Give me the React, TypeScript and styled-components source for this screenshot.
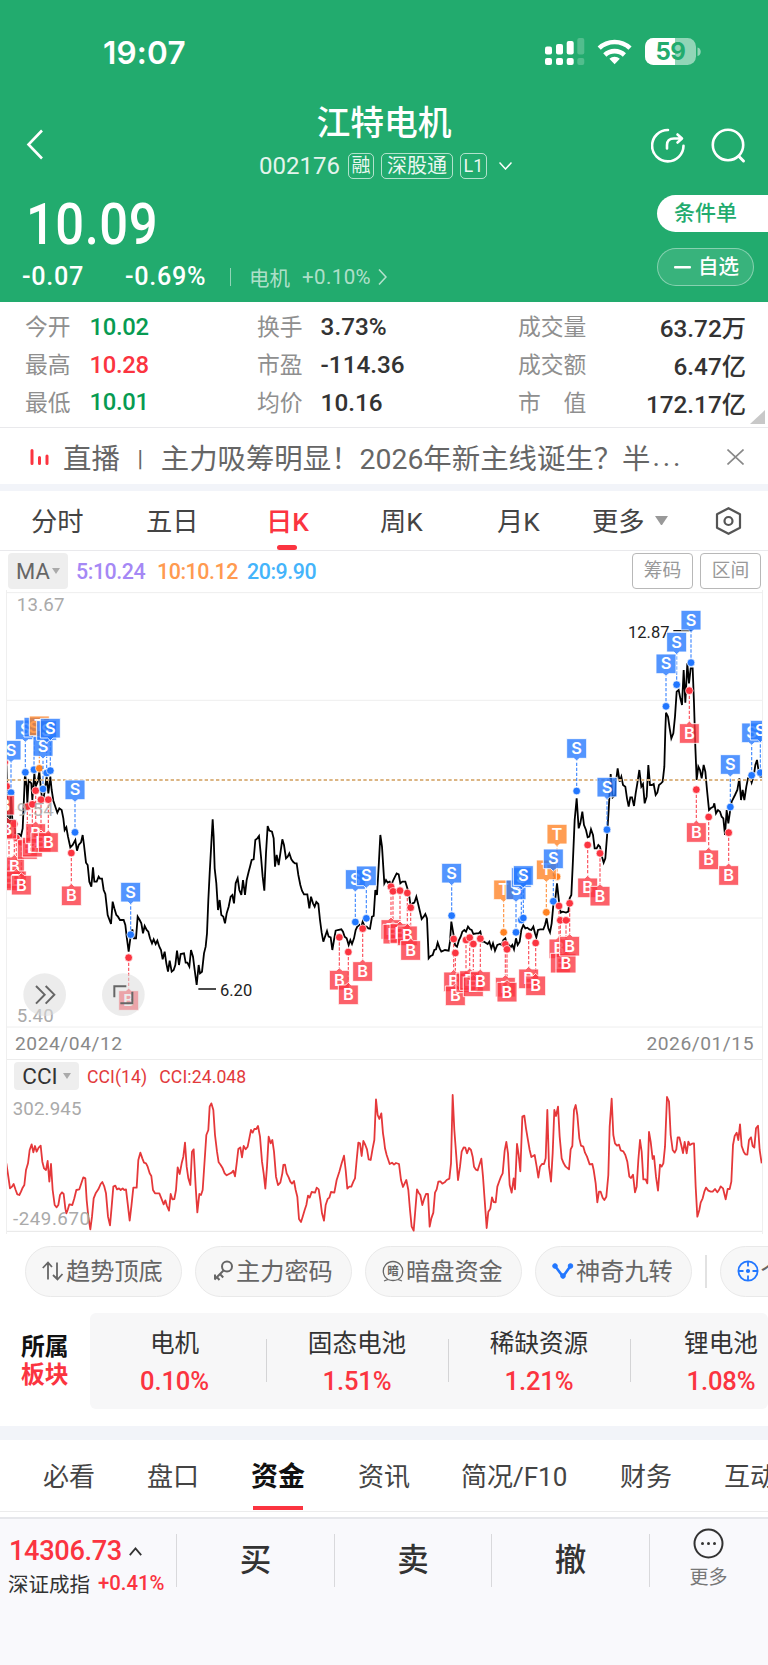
import React from 'react';
import styled, { createGlobalStyle, css } from 'styled-components';

const GREEN = '#22ab6e';
const RED = '#fb3440';

const GlobalStyle = createGlobalStyle`
  * { box-sizing: border-box; }
  body {
    margin: 0;
    width: 768px;
    background: #fff;
    font-family: Roboto, "Noto Sans CJK SC", sans-serif;
    color: #333;
  }
`;

const Screen = styled.main`
  width: 768px;
  height: 1665px;
  overflow: hidden;
  display: flex;
  flex-direction: column;
  background: #fff;
`;

/* ---------- header ---------- */

const Header = styled.header`
  height: 302px;
  background: ${GREEN};
  color: #fff;
`;

const StatusBar = styled.div`
  display: flex;
  justify-content: space-between;
  align-items: center;
  padding: 38px 67px 0 103px;
  height: 66px;
`;

const Clock = styled.span`
  font: 600 31.5px/28px Inter, sans-serif;
  letter-spacing: 0.2px;
  padding-top: 2px;
`;

const NavBar = styled.div`
  display: flex;
  justify-content: space-between;
  height: 124px;
  padding: 32px 22px 0 26px;
`;

const NavSide = styled.div`
  display: flex;
  width: 95px;
  padding-top: 30px;
`;

const TitleBlock = styled.div`
  display: flex;
  flex-direction: column;
  align-items: center;
  padding-right: 1px;
`;

const Title = styled.h1`
  margin: 0 3px 0 0;
  font-size: 33.8px;
  font-weight: 500;
  line-height: 52px;
`;

const CodeRow = styled.div`
  display: flex;
  align-items: center;
  height: 32px;
`;

const Code = styled.span`
  font-size: 24px;
  margin-right: 8px;
  opacity: 0.88;
`;

const Tag = styled.span<{ $w: number; $size?: number; $gap?: number }>`
  width: ${(p) => p.$w}px;
  height: 26px;
  margin-right: ${(p) => p.$gap ?? 7}px;
  border: 1.5px solid rgba(255, 255, 255, 0.65);
  border-radius: 5px;
  font-size: ${(p) => p.$size ?? 20}px;
  line-height: 24px;
  text-align: center;
  white-space: nowrap;
  color: rgba(255, 255, 255, 0.92);
`;

const QuoteArea = styled.div`
  display: flex;
  justify-content: space-between;
  height: 112px;
`;

const PriceBlock = styled.div`
  padding-left: 22px;
`;

const Price = styled.div`
  padding: 3px 0 0 4px;
  height: 65px;
  font-size: 58px;
  font-weight: 500;
  line-height: 62px;
  transform: scaleX(0.875);
  transform-origin: 4px 0;
  letter-spacing: 0.6px;
`;

const ChangeRow = styled.div`
  display: flex;
  align-items: center;
  height: 43px;
  font-size: 25.2px;
`;

const Change = styled.span<{ $w: number }>`
  width: ${(p) => p.$w}px;
  font-weight: 500;
  letter-spacing: 0.7px;
`;

const ThinBar = styled.i`
  width: 1px;
  height: 18px;
  background: rgba(255, 255, 255, 0.5);
`;

const Industry = styled.span`
  display: flex;
  align-items: center;
  gap: 12px;
  margin-left: 18px;
  font-size: 20.5px;
  color: rgba(255, 255, 255, 0.65);
  span { letter-spacing: 0.4px; }
  svg { margin-left: -5px; }
`;

const Actions = styled.div`
  display: flex;
  flex-direction: column;
  gap: 16px;
  width: 111px;
  padding-top: 5px;
`;

const ConditionButton = styled.button`
  height: 37px;
  padding: 0 0 0 17px;
  border: 0;
  border-radius: 19px 0 0 19px;
  background: #fff;
  color: ${GREEN};
  font: 500 21px/37px Roboto, "Noto Sans CJK SC", sans-serif;
  text-align: left;
`;

const WatchButton = styled.button`
  display: flex;
  align-items: center;
  gap: 7px;
  width: 97px;
  height: 38px;
  padding: 0 0 0 16px;
  border: 1.5px solid rgba(255, 255, 255, 0.4);
  border-radius: 19px;
  background: rgba(255, 255, 255, 0.1);
  color: #fff;
  font: 500 20.5px/35px Roboto, "Noto Sans CJK SC", sans-serif;
`;

/* ---------- key figures ---------- */

const Stats = styled.section`
  position: relative;
  display: grid;
  grid-template-columns: 232px 261px 228px;
  grid-auto-rows: 37.7px;
  height: 126px;
  padding: 5px 0 0 25px;
  border-bottom: 1.5px solid #e9e9ec;
`;

const Stat = styled.div<{ $gap: number; $spread?: boolean }>`
  display: flex;
  align-items: center;
  justify-content: ${(p) => (p.$spread ? 'space-between' : 'flex-start')};
  gap: ${(p) => p.$gap}px;
`;

const StatLabel = styled.span`
  font-size: 22.8px;
  color: #8f8f8f;
  white-space: pre;
`;

const StatValue = styled.span<{ $color?: string }>`
  padding-top: 2px;
  font-size: ${(p) => (p.$color ? 23.8 : 24.3)}px;
  font-weight: 500;
  letter-spacing: ${(p) => (p.$color ? -0.3 : 0)}px;
  color: ${(p) => p.$color ?? '#333'};
`;

const Corner = styled.svg`
  position: absolute;
  right: 3px;
  bottom: 3px;
`;

/* ---------- notice ---------- */

const Notice = styled.section`
  display: flex;
  align-items: center;
  height: 56px;
  padding: 0 24px 0 30px;
  font-size: 28.4px;
  color: #666;
  svg { margin-top: 2px; }
`;

const NoticeText = styled.span`
  display: flex;
  align-items: center;
  flex: 1;
  margin-left: 14px;
  white-space: pre;
`;

const NoticeBar = styled.i`
  margin: 3px 10px 0 10px;
  font-size: 21px;
  font-style: normal;
`;

const Dots = styled.span`
  margin-left: 2px;
  letter-spacing: 2.8px;
`;

const Band = styled.div<{ $h: number }>`
  height: ${(p) => p.$h}px;
  background: #f2f4f9;
`;

/* ---------- period tabs ---------- */

const PeriodTabs = styled.nav`
  display: flex;
  height: 60px;
  padding-left: 31px;
  border-bottom: 1.5px solid #e9e9ec;
`;

const Period = styled.span<{ $w: number; $active?: boolean }>`
  position: relative;
  width: ${(p) => p.$w}px;
  font-size: 26.3px;
  line-height: 62px;
  color: ${(p) => (p.$active ? RED : '#444')};
  font-weight: ${(p) => (p.$active ? 500 : 400)};
  ${(p) =>
    p.$active &&
    css`
      &::after {
        content: '';
        position: absolute;
        left: 11px;
        bottom: 0;
        width: 20px;
        height: 5px;
        border-radius: 2.5px;
        background: ${RED};
      }
    `}
`;

const PeriodIcon = styled.span<{ $w: number }>`
  display: flex;
  align-items: center;
  width: ${(p) => p.$w}px;
`;

/* ---------- chart ---------- */

const MaRow = styled.div`
  display: flex;
  align-items: center;
  height: 39px;
  padding: 1px 7px 0 8px;
`;

const Picker = styled.span<{ $w: number; $h: number; $size: number; $color: string }>`
  display: flex;
  align-items: center;
  justify-content: center;
  gap: ${(p) => (p.$h > 30 ? 2 : 5)}px;
  width: ${(p) => p.$w}px;
  height: ${(p) => p.$h}px;
  border-radius: 4px;
  background: #eee;
  font-size: ${(p) => p.$size}px;
  color: ${(p) => p.$color};
`;

const MaValues = styled.div`
  display: flex;
  flex: 1;
  margin-left: 8px;
`;

const MaValue = styled.span<{ $w: number; $color: string }>`
  width: ${(p) => p.$w}px;
  font-size: 21.4px;
  font-weight: 500;
  letter-spacing: -0.45px;
  color: ${(p) => p.$color};
`;

const OutlineButton = styled.button`
  width: 61px;
  height: 36px;
  margin-left: 7px;
  padding: 1px 0 0;
  border: 1.5px solid #b8b8b8;
  border-radius: 4px;
  background: #fff;
  color: #999;
  font: 400 18.8px/33px Roboto, "Noto Sans CJK SC", sans-serif;
`;

const Spacer = styled.i`
  flex: 1;
`;

const ChartFrame = styled.section`
  width: 757px;
  margin-left: 6px;
  border: solid #efefef;
  border-width: 0 1px;
`;

const Plot = styled.svg`
  display: block;
  width: 755px;
`;

const DateRow = styled.div`
  display: flex;
  justify-content: space-between;
  align-items: center;
  height: 32px;
  padding: 0 8px 0 8px;
  border-bottom: 1px solid #ececec;
  font-size: 19.2px;
  letter-spacing: 0.55px;
  color: #888;
`;

const CciHead = styled.div`
  display: flex;
  align-items: center;
  gap: 8px;
  height: 32px;
  padding-left: 7px;
  font-size: 17.6px;
  color: #e23a3c;
`;

const CciText = styled.span<{ $gap?: number }>`
  padding-top: 2px;
  margin-right: ${(p) => p.$gap ?? 0}px;
  letter-spacing: 0.1px;
`;

/* ---------- shortcuts ---------- */

const Pills = styled.section`
  display: flex;
  align-items: center;
  gap: 13px;
  height: 74px;
  padding-left: 25px;
  overflow: hidden;
`;

const Pill = styled.span`
  display: flex;
  flex: none;
  align-items: center;
  width: 157px;
  height: 51px;
  padding: 0 0 3px 16px;
  border: 1px solid #e9e9e9;
  border-radius: 26px;
  background: #f7f7f7;
  font-size: 24.2px;
  color: #666;
  white-space: nowrap;
  svg { flex: none; margin: 2px 2px 0 0; }
`;

const PillBar = styled.i`
  flex: none;
  width: 1.5px;
  height: 33px;
  background: #e2e2e2;
`;

/* ---------- sectors ---------- */

const Sectors = styled.section`
  display: flex;
  height: 118px;
  padding-top: 5px;
`;

const SectorTitle = styled.div`
  width: 90px;
  padding: 20px 0 0 21px;
  font-size: 23.8px;
  font-weight: 700;
  line-height: 28px;
  color: #111;
  em { display: block; font-style: normal; color: ${RED}; }
`;

const SectorPanel = styled.div`
  display: flex;
  flex: 1;
  height: 96px;
  border-radius: 6px;
  background: #f7f7f8;
  overflow: hidden;
`;

const Sector = styled.div<{ $first?: boolean }>`
  flex: none;
  display: flex;
  flex-direction: column;
  align-items: center;
  position: relative;
  width: ${(p) => (p.$first ? 177 : 182)}px;
  padding: ${(p) => (p.$first ? '15px 8px 0 0' : '15px 2px 0 0')};
  font-size: 24.6px;
  line-height: 32px;
  &:not(:last-child)::after {
    content: '';
    position: absolute;
    right: 0;
    top: 26px;
    width: 1.5px;
    height: 43px;
    background: #d4d4d6;
  }
  b {
    margin-top: 6px;
    font-size: 25.6px;
    font-weight: 500;
    line-height: 30px;
    letter-spacing: -0.1px;
    color: ${RED};
  }
`;

/* ---------- info tabs ---------- */

const InfoTabs = styled.nav`
  display: flex;
  height: 72px;
  padding-left: 43px;
  border-bottom: 1px solid #ececec;
  overflow: hidden;
`;

const InfoTab = styled.span<{ $w: number; $active?: boolean }>`
  position: relative;
  flex: none;
  width: ${(p) => p.$w}px;
  font-size: ${(p) => (p.$active ? 27 : 26)}px;
  line-height: 74px;
  font-weight: ${(p) => (p.$active ? 700 : 400)};
  color: ${(p) => (p.$active ? '#111' : '#444')};
  ${(p) =>
    p.$active &&
    css`
      &::after {
        content: '';
        position: absolute;
        left: 2px;
        bottom: 1px;
        width: 50px;
        height: 4px;
        background: ${RED};
      }
    `}
`;

/* ---------- bottom bar ---------- */

const BottomBar = styled.footer`
  display: flex;
  flex: 1;
  margin-top: 5px;
  border-top: 2px solid #e6e7eb;
  background: #f9f9fc;
`;

const IndexBlock = styled.div`
  width: 176px;
  padding: 16px 0 0 8px;
`;

const IndexValue = styled.div`
  display: flex;
  align-items: center;
  gap: 7px;
  height: 32px;
  padding-left: 1px;
  font-size: 27.2px;
  font-weight: 500;
  letter-spacing: -0.35px;
  color: ${RED};
`;

const IndexName = styled.div`
  display: flex;
  align-items: center;
  gap: 8px;
  height: 31px;
  font-size: 20.5px;
  white-space: nowrap;
  b { font-weight: 500; font-size: 20.3px; color: ${RED}; }
`;

const Trade = styled.span<{ $w: number }>`
  width: ${(p) => p.$w}px;
  height: 53px;
  margin-top: 15px;
  border-left: 1.5px solid #d9d9dc;
  font-size: 31.5px;
  font-weight: 500;
  line-height: 54px;
  text-align: center;
`;

const More = styled.div`
  display: flex;
  flex-direction: column;
  align-items: center;
  width: 119px;
  height: 53px;
  margin-top: 15px;
  padding-right: 1px;
  border-left: 1.5px solid #d9d9dc;
  font-size: 19px;
  line-height: 30px;
  color: #777;
  svg { flex: none; margin: -6px 0 4px; }
`;

/* ---------- chart data ---------- */

/* Plot units are a third of a pixel. */
const shift = (dx: number, dy: number, pts: string) =>
  pts
    .trim()
    .split(/\s+/)
    .map((p) => {
      const [x, y] = p.split(',').map(Number);
      return `${x + dx},${y + dy}`;
    })
    .join(' ');

const PRICE = [
  shift(0, 0, `19,517 21,600 24,700 29,720 33,608 37,690 42,690 46,735 57,732 63,738 68,715 73,600 75,550 80,590 82,640 86,572
  94,580 97,630 103,550 107,590 113,575 118,545 122,590 128,640 133,610 140,560 145,610 151,560 155,600 160,632 172,668
  178,655 185,660 190,685 194,720 199,712 204,740 211,772 218,765 226,750 231,782 236,765 243,757 248,735 252,765
  258,818 263,825 268,875 274,890 279,832 283,875 290,875 296,860 300,866 306,866 311,900 316,912 323,975 333,1002
  338,935 343,955 349,975 354,980 360,990 371,990 376,1005 380,1040 386,1085 391,1045 397,1018 402,1045 408,1045
  413,980 419,990 424,1000 429,1030 434,1008 440,1020 445,1025 450,1045 456,1060 461,1048 467,1062 472,1052 478,1070
  483,1080 488,1108 494,1085 499,1120 504,1145 509,1112 515,1145 521,1140 526,1125 531,1082 537,1125 542,1092
  552,1090 557,1118 562,1118 568,1130 573,1080 579,1100 584,1140 590,1185 596,1125 600,1150 606,1145 612,1090
  617,1070 621,1030 625,930 629,850 634,760 638,688 641,740 644,835 649,880 654,960 659,930 664,975 670,980 675,1000
  680,970 686,950 692,920 697,915 702,940 707,880 713,865 718,900 724,915 729,870 735,915 740,870 746,845`),
  shift(750, 450, `0,380 5,360 11,358 16,300 22,295 27,288 33,350 38,410 43,452 48,340 53,258 58,272 66,275 71,295 75,380
  80,345 86,375 91,340 97,298 102,315 108,355 113,350 118,340 124,358 130,366 135,370 140,370 145,405 151,435 156,452
  162,463 172,463 178,505 183,470 189,490 194,500 199,486 205,492 210,540 215,578 220,605 225,590 231,573 236,590
  242,592 247,630 252,600 257,572 263,570 274,568 279,575 284,590 290,595 296,615 301,600 306,612 312,595 317,570
  322,560 328,555 333,565 338,545 344,560 350,560 355,565 360,566 366,530 371,528 376,450 381,465 386,380 391,285
  396,320 403,430 408,420 413,428 419,425 424,435 430,420 435,410 440,400 446,403 451,430 457,425 466,425 472,445
  478,470 482,500 488,490 493,488 499,470 504,490 510,515 515,537 521,530 526,522 531,535 536,655 542,648 548,645
  553,630 558,628 563,608 569,625 574,635 585,630 596,632 600,605 604,545 610,580 615,615 621,620 627,600 632,590
  637,575 643,570 648,575 654,560 660,568 665,570 670,582 680,580 686,580 691,575 697,605 702,605 707,608 713,612
  718,605 724,625 729,610 735,632 742,615 750,612 755,615 760,600 766,595 771,615`),
  shift(1500, 0, `25,1062 32,1072 37,1065 42,1078 48,1045 53,1065 59,1055 64,1020 70,1005 76,1015 82,1013 88,1018 94,1020
  100,1010 105,1030 109,1042 114,1020 121,1018 130,1018 135,1005 140,985 145,1015 150,1027 155,1000 160,945 165,935
  171,880 177,935 182,968 188,965 198,968 205,965 209,925 214,915 218,830 224,690 230,625 236,715 241,700 247,665
  252,705 258,720 263,742 268,740 273,718 279,735 284,775 290,775 295,765 300,770 306,800 311,818 316,805 321,740
  326,660 332,552 338,622 346,615 348,575 353,535 359,575 364,560 369,585 376,590 381,625 386,650 391,622 396,622
  402,648 407,610 412,580 418,540 424,590 429,582 434,640 440,620 445,525 450,585 456,585 461,582 467,615 472,608
  477,585 483,580 488,575 493,530 496,420 498,368 504,380 509,415 514,445 520,430 525,380 530,305 536,300 541,325
  546,345 551,240 556,338 562,220 567,280 572,235 578,235 582,340 586,470 590,570 595,530 600,540 605,565 611,525
  616,545 621,600 627,660 632,655 640,650 643,640 648,670 654,660 660,665 665,680 670,685 675,735 680,660 685,700
  690,665 695,635 705,615 712,600 718,565 723,630 728,600 733,630 739,590 744,565 750,560 755,578 761,560 766,525
  771,510 776,545 781,560 786,560`),
].join(' ');

const CCI = [
  shift(0, 0, `19,430 25,470 30,505 36,500 41,492 47,510 52,523 58,525 63,515 68,503 73,495 78,450 84,430 89,390 95,373
  100,397 105,378 110,395 116,383 122,377 127,425 132,445 138,450 143,423 148,485 153,432 158,510 164,555 170,562
  175,555 180,525 186,517 191,522 196,565 199,580 203,570 208,553 217,555 223,535 229,510 238,508 244,490 250,472
  256,475 260,540 265,590 271,628 276,590 281,535 287,520 295,508 302,492 307,486 313,500 318,520 324,590 330,616
  335,560 340,500 346,497 351,508 357,505 362,510 368,505 373,510 378,508 383,550 389,602 394,560 400,503 410,503
  415,420 421,398 427,415 432,428 438,430 443,440 449,460 454,468 459,510 465,520 478,520 484,535 491,553 496,541
  501,558 507,572 512,522 517,538 523,537 528,510 533,442 539,462 545,430 550,410 555,368 560,440 565,475 571,495
  576,395 581,388 587,500 592,577 598,522 603,525 608,510 614,420 619,345 625,330 629,260 634,250 640,270 645,345
  651,395 656,427 662,435 668,445 674,460 680,466 687,462 695,458 700,452 705,469 710,430 715,387 721,382 726,412
  731,378 737,388 743,380 748,355 753,330 758,338 763,327 769,327 774,318 780,350 786,425 791,460 796,506 801,440
  806,350 812,370 817,360 822,395 828,470 834,495 841,488 847,460 850,435 855,434 860,460 866,472 871,485 876,491
  882,483 887,510 892,530 897,597 903,606 908,590 914,570 919,555 924,527 929,533 935,516 945,518 950,503 956,508
  961,540 966,580 972,602 977,555 983,537 988,533 993,516 1003,518 1010,480 1018,455 1025,430 1032,407 1037,450
  1042,506 1048,500 1054,500 1060,485 1065,475 1070,420 1075,368 1080,370 1085,408 1090,363 1096,375 1101,388
  1106,418 1112,420 1118,385 1123,360 1128,238 1133,285 1138,297 1144,280 1149,340`),
  shift(1152, 0, `0,360 3,385 8,405 17,432 24,428 30,434 36,429 45,432 51,480 57,501 62,490 67,480 73,510 78,570 83,620
  89,632 94,570 99,508 104,518 109,525 115,555 121,535 126,522 132,522 137,620 142,595 148,578 153,518 158,508
  163,485 169,484 175,491 182,487 188,480 196,476 201,430 206,225 211,330 217,410 222,480 228,440 233,395 239,382
  244,383 249,400 255,384 261,390 266,410 270,440 276,449 281,451 287,432 292,416 297,470 302,540 308,624 313,575
  319,566 324,532 329,546 335,547 340,500 346,483 351,470 356,460 362,392 367,366 372,400 377,495 383,518 389,475
  393,508 399,372 404,405 409,454 415,290 421,287 426,325 431,355 437,390 442,411 452,405 458,440 463,473 468,440
  474,432 480,432 485,415 490,270 495,440 501,485 506,400 511,270 516,288 522,260 527,350 533,415 539,430 545,440
  555,448 560,388 565,378 570,270 575,255 580,285 586,355 591,377 598,380 603,398 609,410 617,433 625,432 629,450
  635,490 640,547 645,515 650,515 656,533 661,540 667,530 673,465 677,320 683,236 688,345 693,370 699,377 705,374
  710,391 718,394 724,405 730,425 736,470 741,474 747,464 753,517 758,500 763,420 768,360 773,395 778,478 785,478
  790,490 795,336 800,365 806,417 810,408 816,470 822,512 828,434 833,440 838,430 843,380 849,231 855,245 860,345
  866,390 872,398 877,388 881,352 886,352 891,372 897,399 902,366 908,400 913,365 918,375 924,371 930,370 935,500
  940,590 946,570 950,548 956,535 961,515 966,503 973,512 980,515 986,515 993,507 1000,517 1005,510 1010,499
  1017,505 1025,538 1031,507 1037,507 1042,485 1047,375 1052,348 1058,338 1063,360 1068,313 1073,378 1079,395
  1084,403 1090,404 1095,360 1101,352 1106,378 1111,383 1116,325 1122,317 1127,390 1133,430`),
].join(' ');

type Kind = 'B' | 'S' | 'T';
type MarkerData = [Kind, number, number];

const MARKERS: MarkerData[] = [
  ['B', 14, 517], ['B', 20, 589], ['B', 27, 738], ['B', 43, 702], ['B', 49, 744], ['B', 64, 757],
  ['B', 82, 650], ['B', 97, 643], ['B', 107, 602], ['B', 123, 629], ['B', 145, 629],
  ['S', 33, 608], ['S', 76, 547], ['S', 102, 539], ['T', 118, 535], ['S', 129, 597], ['S', 140, 549], ['S', 151, 542],
  ['B', 214, 789], ['S', 225, 727], ['B', 386, 1103], ['S', 392, 1034],
  ['B', 1018, 1042], ['B', 1045, 1086], ['S', 1066, 996], ['B', 1088, 1016], ['S', 1099, 985],
  ['B', 1173, 890], ['B', 1179, 904], ['B', 1200, 902], ['B', 1222, 909], ['B', 1232, 953],
  ['S', 1355, 977], ['B', 1361, 1047], ['B', 1366, 1089], ['B', 1398, 1050], ['B', 1409, 1043], ['B', 1420, 1062],
  ['B', 1441, 1046], ['T', 1511, 1027], ['B', 1516, 1063], ['B', 1521, 1078], ['S', 1548, 1027], ['S', 1564, 990],
  ['S', 1570, 984], ['B', 1586, 1038], ['B', 1607, 1059], ['T', 1639, 967], ['T', 1671, 860], ['S', 1660, 934],
  ['B', 1677, 948], ['B', 1681, 991], ['B', 1698, 991], ['B', 1709, 940], ['S', 1730, 603], ['B', 1763, 765],
  ['B', 1800, 790], ['S', 1821, 719], ['S', 1998, 349], ['S', 2030, 284], ['B', 2068, 302], ['S', 2073, 218],
  ['B', 2089, 599], ['B', 2126, 681], ['B', 2186, 728], ['S', 2191, 651], ['S', 2255, 556], ['S', 2281, 548],
];

const TONE: Record<Kind, string> = { B: RED, S: '#2277ff', T: '#ff8222' };

const Stem = ({ data: [kind, x, y] }: { data: MarkerData }) => {
  const end = kind === 'B' ? y + 92 : y - 92;
  return (
    <g>
      <line x1={x} x2={x} y1={y} y2={end} stroke={TONE[kind]} strokeWidth="3.5" strokeDasharray="10 5" opacity="0.85" />
      <circle cx={x} cy={y} r="11.5" fill={TONE[kind]} stroke="#fff" strokeWidth="2" />
    </g>
  );
};

const Flag = ({ data: [kind, x, y] }: { data: MarkerData }) => {
  const top = kind === 'B' ? y + 99 : y - 157;
  const d =
    kind === 'B'
      ? `M${x - 30} ${top}h22l8 -8l8 8h22v59h-60z`
      : `M${x - 30} ${top}h60v59h-22l-8 8l-8 -8h-22z`;
  return (
    <g>
      <path d={d} fill={TONE[kind]} fillOpacity="0.78" stroke="#fff" strokeOpacity="0.85" strokeWidth="3" />
      <text x={x} y={top + 46} textAnchor="middle" fontSize="49" fontWeight="600" fontFamily="Inter, sans-serif" fill="#fff">
        {kind}
      </text>
    </g>
  );
};

const PriceChart = () => (
  <Plot viewBox="21 0 2265 1314" height="438">
    <g stroke="#eeeeee" strokeWidth="3">
      {[8, 331, 658, 984, 1311].map((y) => (
        <line key={y} x1="19" x2="2290" y1={y} y2={y} />
      ))}
    </g>
    <polyline points={PRICE} fill="none" stroke="#000" strokeWidth="5.4" strokeLinejoin="miter" />
    <line x1="19" x2="2290" y1="570" y2="570" stroke="#dcb583" strokeWidth="6" strokeDasharray="10 7" />
    <g fontSize="56" fill="#aaaaaa" letterSpacing="0.8">
      <text x="50" y="63">13.67</text>
      <text x="50" y="1296">5.40</text>
    </g>
    <g fontSize="49.5" fill="#222">
      <text x="1884" y="143">12.87</text>
      <text x="660" y="1218">6.20</text>
    </g>
    <path d="M2020 122h55M595 1197h53" stroke="#111" strokeWidth="4" />
    {MARKERS.map((m) => (
      <Stem key={m.join()} data={m} />
    ))}
    {MARKERS.map((m) => (
      <Flag key={m.join()} data={m} />
    ))}
    <text x="50" y="678" fontSize="56" letterSpacing="0.8" fill="#aaa" fillOpacity="0.85">9.54</text>
    <g fill="#dcdcdc" fillOpacity="0.55">
      <circle cx="134" cy="1214" r="64" />
      <circle cx="370" cy="1214" r="64" />
    </g>
    <g fill="none" stroke="#666" strokeWidth="6">
      <path d="M108 1188l26 26l-26 27M137 1188l26 26l-26 27" />
      <path d="M343 1222v-33h36M397 1205v35h-36" />
    </g>
  </Plot>
);

const CciChart = () => (
  <Plot viewBox="21 216 2265 426" height="142">
    <line x1="19" x2="2290" y1="634" y2="634" stroke="#e6e6e6" strokeWidth="3" />
    <polyline points={CCI} fill="none" stroke="#e5383a" strokeWidth="5.4" strokeLinejoin="round" />
    <g fontSize="56" fill="#aaaaaa">
      <text x="38" y="285" letterSpacing="0.5">302.945</text>
      <text x="39" y="615" letterSpacing="1.7">-249.670</text>
    </g>
  </Plot>
);

const Down = ({ w = 8, color = '#aaa' }: { w?: number; color?: string }) => (
  <svg width={w} height={w * 0.75} viewBox="0 0 12 9">
    <path d="M0 0h12L6 9z" fill={color} />
  </svg>
);

/* ---------- icons ---------- */

const StatusIcons = () => (
  <svg width="156" height="28" viewBox="545 38 156 28">
    <g fill="#fff">
      <rect x="545" y="46.5" width="7" height="8" rx="2" />
      <rect x="556" y="44" width="7" height="10.5" rx="2" />
      <rect x="566.7" y="41" width="7" height="13.5" rx="2" />
      <rect x="577.3" y="38" width="7" height="16.5" rx="2" opacity="0.22" />
      <rect x="545" y="58" width="7" height="7" rx="2" />
      <rect x="556" y="58" width="7" height="7" rx="2" />
      <rect x="566.7" y="58" width="7" height="7" rx="2" />
      <rect x="577.3" y="58" width="7" height="7" rx="2" opacity="0.22" />
      <path d="M614.6 64.2l-5.2-5.400a7.600 7.600 0 0 1 10.400 0z" />
    </g>
    <g fill="none" stroke="#fff" strokeWidth="4.6">
      <path d="M599.2 48.200a22.300 22.300 0 0 1 30.800 0" />
      <path d="M604.8 55a14.200 14.200 0 0 1 19.600 0" />
    </g>
    <clipPath id="battery">
      <rect x="645" y="38" width="51" height="27" rx="8.5" />
    </clipPath>
    <g clipPath="url(#battery)" fill="#fff">
      <rect x="645" y="38" width="51" height="27" opacity="0.5" />
      <rect x="645" y="38" width="30" height="27" />
    </g>
    <path d="M697.5 47.500c4.300 1 4.300 7.500 0 8.500z" fill="#fff" opacity="0.5" />
    <text x="670.5" y="60.3" textAnchor="middle" fontFamily="Inter, sans-serif" fontWeight="700" fontSize="24" letterSpacing="-0.5" fill={GREEN}>
      59
    </text>
  </svg>
);

const BackIcon = () => (
  <svg width="18" height="32" viewBox="0 0 18 32" fill="none" stroke="#fff" strokeWidth="2.6">
    <path d="M16 2.500L2.500 16.500L16 30.500" />
  </svg>
);

const ShareIcon = () => (
  <svg width="36" height="36" viewBox="0 0 36 36" fill="none" stroke="#fff" strokeWidth="2.6" strokeLinecap="round" strokeLinejoin="round">
    <path d="M17 2A15.700 15.700 0 1 0 32.500 17.800" />
    <path d="M16 20.500v-3.500q0-6.500 7-6.500h7M26.500 6.500l4.500 4l-4.500 4" />
  </svg>
);

const SearchIcon = () => (
  <svg width="36" height="36" viewBox="0 0 36 36" fill="none" stroke="#fff" strokeWidth="2.6" strokeLinecap="round">
    <circle cx="18" cy="17" r="15.2" />
    <path d="M29 28.500l4.500 4.500" strokeWidth="3" />
  </svg>
);

const BLUE = '#2277ff';

const App = () => (
  <>
    <GlobalStyle />
    <Screen>
      <Header>
        <StatusBar>
          <Clock>19:07</Clock>
          <StatusIcons />
        </StatusBar>
        <NavBar>
          <NavSide>
            <BackIcon />
          </NavSide>
          <TitleBlock>
            <Title>江特电机</Title>
            <CodeRow>
              <Code>002176</Code>
              <Tag $w={26} $size={19}>融</Tag>
              <Tag $w={72} $size={20}>深股通</Tag>
              <Tag $w={27} $size={18} $gap={12}>L1</Tag>
              <svg width="13" height="8" viewBox="0 0 13 8" fill="none" stroke="#fff" strokeWidth="1.5">
                <path d="M0.500 0.500l6 6.500l6-6.500" />
              </svg>
            </CodeRow>
          </TitleBlock>
          <NavSide>
            <ShareIcon />
            <Spacer />
            <SearchIcon />
          </NavSide>
        </NavBar>
        <QuoteArea>
          <PriceBlock>
            <Price>10.09</Price>
            <ChangeRow>
              <Change $w={103}>-0.07</Change>
              <Change $w={105}>-0.69%</Change>
              <ThinBar />
              <Industry>
                电机 <span>+0.10%</span>
                <svg width="9" height="16" viewBox="0 0 9 16" fill="none" stroke="currentColor" strokeWidth="1.6">
                  <path d="M1 0.500l7 7.500l-7 7.500" />
                </svg>
              </Industry>
            </ChangeRow>
          </PriceBlock>
          <Actions>
            <ConditionButton>条件单</ConditionButton>
            <WatchButton>
              <svg width="17" height="3" viewBox="0 0 17 3">
                <rect width="17" height="2.4" rx="1" fill="#fff" />
              </svg>
              自选
            </WatchButton>
          </Actions>
        </QuoteArea>
      </Header>

      <Stats>
        <Stat $gap={19}><StatLabel>今开</StatLabel><StatValue $color="#079b52">10.02</StatValue></Stat>
        <Stat $gap={18}><StatLabel>换手</StatLabel><StatValue>3.73%</StatValue></Stat>
        <Stat $gap={0} $spread><StatLabel>成交量</StatLabel><StatValue>63.72万</StatValue></Stat>
        <Stat $gap={19}><StatLabel>最高</StatLabel><StatValue $color={RED}>10.28</StatValue></Stat>
        <Stat $gap={18}><StatLabel>市盈</StatLabel><StatValue>-114.36</StatValue></Stat>
        <Stat $gap={0} $spread><StatLabel>成交额</StatLabel><StatValue>6.47亿</StatValue></Stat>
        <Stat $gap={19}><StatLabel>最低</StatLabel><StatValue $color="#079b52">10.01</StatValue></Stat>
        <Stat $gap={18}><StatLabel>均价</StatLabel><StatValue>10.16</StatValue></Stat>
        <Stat $gap={0} $spread><StatLabel>市　值</StatLabel><StatValue>172.17亿</StatValue></Stat>
        <Corner width="15" height="14" viewBox="0 0 15 14"><path d="M15 0v14H0z" fill="#c8c8c8" /></Corner>
      </Stats>

      <Notice>
        <svg width="19" height="16" viewBox="0 0 19 16" stroke={RED} strokeWidth="3" strokeLinecap="round">
          <path d="M2 1.500v13M9.500 8.500v6M17 7v7.500" />
        </svg>
        <NoticeText>
          直播<NoticeBar>丨</NoticeBar>主力吸筹明显！2026年新主线诞生？半<Dots>...</Dots>
        </NoticeText>
        <svg width="17" height="16" viewBox="0 0 17 16" stroke="#888" strokeWidth="1.6">
          <path d="M0.500 0.500l16 15M16.500 0.500l-16 15" />
        </svg>
      </Notice>
      <Band $h={7} />

      <PeriodTabs>
        <Period $w={115}>分时</Period>
        <Period $w={120}>五日</Period>
        <Period $w={114} $active>日K</Period>
        <Period $w={117}>周K</Period>
        <Period $w={95}>月K</Period>
        <Period $w={63}>更多</Period>
        <PeriodIcon $w={60}><Down w={13} color="#999" /></PeriodIcon>
        <PeriodIcon $w={28}>
          <svg width="27" height="28" viewBox="0 0 27 28" fill="none" stroke="#555" strokeWidth="2.2" strokeLinejoin="round">
            <path d="M13.500 1.200l11.500 6.100v13.400l-11.500 6.100l-11.500-6.100v-13.400z" />
            <circle cx="13.5" cy="14" r="4" />
          </svg>
        </PeriodIcon>
      </PeriodTabs>

      <MaRow>
        <Picker $w={60} $h={36} $size={22} $color="#666">MA<Down w={8} /></Picker>
        <MaValues>
          <MaValue $w={81} $color="#a588f5">5:10.24</MaValue>
          <MaValue $w={90} $color="#ff9a50">10:10.12</MaValue>
          <MaValue $w={80} $color="#44b4fb">20:9.90</MaValue>
        </MaValues>
        <OutlineButton>筹码</OutlineButton>
        <OutlineButton>区间</OutlineButton>
      </MaRow>

      <ChartFrame>
        <PriceChart />
        <DateRow>
          <span>2024/04/12</span>
          <span>2026/01/15</span>
        </DateRow>
        <CciHead>
          <Picker $w={65} $h={28} $size={22.5} $color="#333">CCI<Down w={8} /></Picker>
          <CciText $gap={4}>CCI(14)</CciText>
          <CciText>CCI:24.048</CciText>
        </CciHead>
        <CciChart />
      </ChartFrame>

      <Pills>
        <Pill>
          <svg width="22" height="20" viewBox="0 0 22 20" fill="none" stroke="#666" strokeWidth="1.8">
            <path d="M6 18.500V1.500M0.800 7L6 1.500L10 6M15 1.500v17M11 14l4.500 4.500L20.500 13" />
          </svg>
          趋势顶底
        </Pill>
        <Pill>
          <svg width="22" height="22" viewBox="0 0 22 22" fill="none" stroke="#666" strokeWidth="2">
            <circle cx="15" cy="6.5" r="5" />
            <path d="M11.500 10.500L2.500 19.500M8 14l3.200 3.500M4.800 17l2.700 3M3 14.500v5" />
          </svg>
          主力密码
        </Pill>
        <Pill>
          <svg width="22" height="22" viewBox="0 0 22 22" fill="none" stroke="#666" strokeWidth="1.3">
            <path d="M6 19.500a9.700 9.700 0 1 1 10 0M2 21l4-1.500q5 2 10 0l4 1.500" />
            <text x="11" y="15" textAnchor="middle" fontSize="11.5" fontWeight="700" fill="#666" stroke="none">暗</text>
          </svg>
          暗盘资金
        </Pill>
        <Pill>
          <svg width="22" height="22" viewBox="0 0 22 22" fill={BLUE} stroke={BLUE}>
            <path d="M3 6l8 10.500L18.500 6" fill="none" strokeWidth="2.6" />
            <circle cx="3" cy="6" r="2.3" />
            <circle cx="18.5" cy="6" r="2.3" />
            <circle cx="11" cy="16" r="2.3" />
          </svg>
          神奇九转
        </Pill>
        <PillBar />
        <Pill>
          <svg width="22" height="22" viewBox="0 0 22 22" fill="none" stroke={BLUE} strokeWidth="1.8">
            <circle cx="11" cy="11" r="9.6" />
            <path d="M11 1v5.500M11 15.500V21M1 11h5.500M15.500 11H21" />
            <circle cx="11" cy="11" r="1.2" fill={BLUE} />
          </svg>
          个股
        </Pill>
      </Pills>

      <Sectors>
        <SectorTitle>
          所属<em>板块</em>
        </SectorTitle>
        <SectorPanel>
          <Sector $first>电机<b>0.10%</b></Sector>
          <Sector>固态电池<b>1.51%</b></Sector>
          <Sector>稀缺资源<b>1.21%</b></Sector>
          <Sector>锂电池<b>1.08%</b></Sector>
        </SectorPanel>
      </Sectors>
      <Band $h={14} />

      <InfoTabs>
        <InfoTab $w={104}>必看</InfoTab>
        <InfoTab $w={104}>盘口</InfoTab>
        <InfoTab $w={107} $active>资金</InfoTab>
        <InfoTab $w={103}>资讯</InfoTab>
        <InfoTab $w={159}>简况/F10</InfoTab>
        <InfoTab $w={104}>财务</InfoTab>
        <InfoTab $w={60}>互动</InfoTab>
      </InfoTabs>

      <BottomBar>
        <IndexBlock>
          <IndexValue>
            14306.73
            <svg width="13" height="9" viewBox="0 0 13 9" fill="none" stroke="#333" strokeWidth="1.8">
              <path d="M0.800 8.200l5.700-6.700l5.700 6.700" />
            </svg>
          </IndexValue>
          <IndexName>
            深证成指 <b>+0.41%</b>
          </IndexName>
        </IndexBlock>
        <Trade $w={158}>买</Trade>
        <Trade $w={157}>卖</Trade>
        <Trade $w={158}>撤</Trade>
        <More>
          <svg width="31" height="31" viewBox="0 0 31 31" fill="none" stroke="#333" strokeWidth="2">
            <circle cx="15.5" cy="15.5" r="14" />
            <g fill="#333" stroke="none">
              <circle cx="9.5" cy="15.5" r="1.5" />
              <circle cx="15.5" cy="15.5" r="1.5" />
              <circle cx="21.5" cy="15.5" r="1.5" />
            </g>
          </svg>
          更多
        </More>
      </BottomBar>
    </Screen>
  </>
);

export default App;
